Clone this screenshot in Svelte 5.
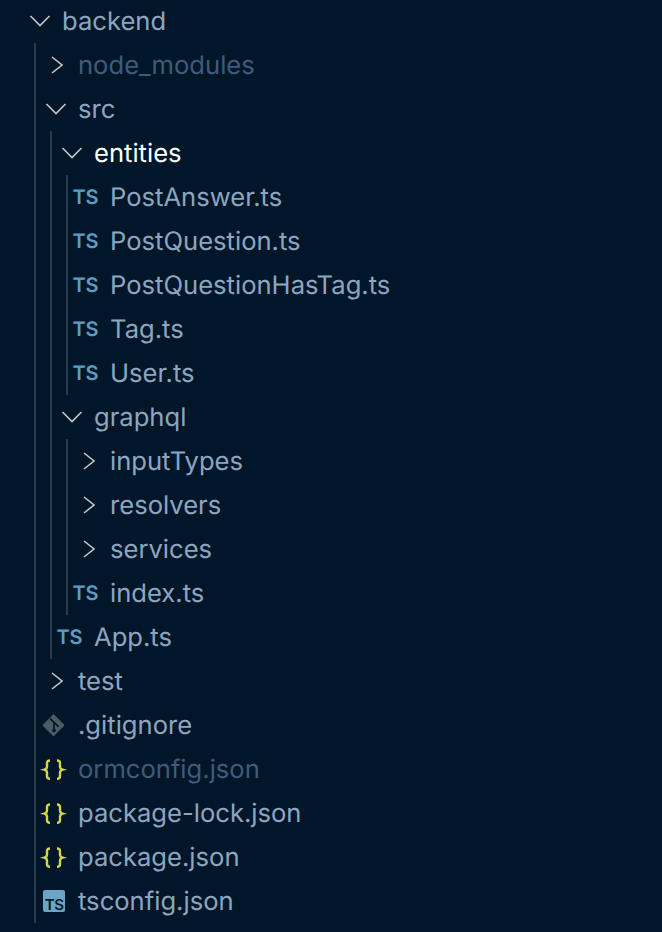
<script lang="ts">
  type Node = {
    name: string;
    icon?: 'ts' | 'json' | 'git' | 'tsconfig';
    open?: boolean;
    dim?: boolean;
    active?: boolean;
    children?: Node[];
  };

  const ts = (name: string): Node => ({ name, icon: 'ts' });

  const tree: Node[] = [
    {
      name: 'backend',
      open: true,
      children: [
        { name: 'node_modules', dim: true },
        {
          name: 'src',
          open: true,
          children: [
            {
              name: 'entities',
              open: true,
              active: true,
              children: [
                ts('PostAnswer.ts'),
                ts('PostQuestion.ts'),
                ts('PostQuestionHasTag.ts'),
                ts('Tag.ts'),
                ts('User.ts'),
              ],
            },
            {
              name: 'graphql',
              open: true,
              children: [{ name: 'inputTypes' }, { name: 'resolvers' }, { name: 'services' }, ts('index.ts')],
            },
            ts('App.ts'),
          ],
        },
        { name: 'test' },
        { name: '.gitignore', icon: 'git' },
        { name: 'ormconfig.json', icon: 'json', dim: true },
        { name: 'package-lock.json', icon: 'json' },
        { name: 'package.json', icon: 'json' },
        { name: 'tsconfig.json', icon: 'tsconfig' },
      ],
    },
  ];
</script>

{#snippet row(node: Node)}
  <div class="row" class:dim={node.dim} class:active={node.active}>
    <span class="icon">
      {#if node.icon === 'ts'}
        <span class="ts">TS</span>
      {:else if node.icon === 'tsconfig'}
        <span class="ts-box">TS</span>
      {:else if node.icon === 'json'}
        <svg viewBox="0 0 32 32" width="32" height="32" fill="none" stroke="#d3d34f" stroke-width="2.4">
          <path d="M12 7.500c-2.200 0-3 .8-3 2.600v3.500c0 1.600-.8 2.600-2.600 3.100 1.800.5 2.600 1.500 2.600 3.100v3.500c0 1.800.8 2.600 3 2.600" />
          <path d="M19 7.500c2.200 0 3 .8 3 2.600v3.500c0 1.600.8 2.600 2.600 3.100-1.800.5-2.600 1.500-2.600 3.100v3.500c0 1.800-.8 2.600-3 2.600" />
        </svg>
      {:else if node.icon === 'git'}
        <svg viewBox="0 0 32 32" width="32" height="32">
          <path fill="#4a5c65" d="M15.500 5 26 15.500a1 1 0 0 1 0 1.400L16.200 26.700a1 1 0 0 1-1.400 0L5 16.900a1 1 0 0 1 0-1.400Z" />
          <path fill="none" stroke="#02162a" stroke-width="1.700" d="M12 9.500 16 13.500M16 12.500V21M16.300 13.500 20.500 17.700" />
          <circle cx="16" cy="21.500" r="1.800" fill="#02162a" />
        </svg>
      {:else if node.open}
        <svg viewBox="0 0 32 32" width="32" height="32" fill="none" stroke="#c8c8c8" stroke-width="1.600">
          <path d="M8.500 11 18 20.500 27.500 11" />
        </svg>
      {:else}
        <svg viewBox="0 0 32 32" width="32" height="32" fill="none" stroke="#c8c8c8" stroke-width="1.600">
          <path d="M14 8 24 16 14 24" />
        </svg>
      {/if}
    </span>
    <span class="name">{node.name}</span>
  </div>
  {#if node.children}
    <div class="children">
      {#each node.children as child}
        {@render row(child)}
      {/each}
    </div>
  {/if}
{/snippet}

<div class="explorer">
  {#each tree as node}
    {@render row(node)}
  {/each}
</div>

<style>
  :global(body) {
    background: #02162a;
  }

  .explorer {
    height: 932px;
    box-sizing: border-box;
    padding-left: 20px;
    overflow: hidden;
    background: #02162a;
    font-family: Inter, "Noto Sans", sans-serif;
    font-size: 25.6px;
    text-rendering: geometricPrecision;
    color: #8ca6c0;
  }

  .explorer > .row:first-child {
    margin-top: -1px;
  }

  .row {
    display: flex;
    align-items: center;
    height: 44px;
    padding-left: 2px;
    white-space: nowrap;
  }

  .row.dim {
    color: #3e5c79;
  }

  .row.active {
    color: #ffffff;
  }

  .icon {
    flex: none;
    display: flex;
    align-items: center;
    justify-content: center;
    width: 31px;
    height: 32px;
    margin-right: 9px;
  }

  .icon svg {
    flex: none;
    display: block;
  }

  .ts {
    color: #5a9fc2;
    font-size: 20px;
    font-weight: 600;
    line-height: 1;
  }

  .ts-box {
    display: flex;
    align-items: flex-end;
    justify-content: flex-end;
    box-sizing: border-box;
    width: 22px;
    height: 22px;
    padding: 0 1px 0 0;
    border-radius: 2px;
    background: #6aa5c5;
    color: #02162a;
    font-size: 15px;
    font-weight: 600;
    letter-spacing: -0.5px;
    line-height: 1;
  }

  .children {
    margin-left: 14px;
    border-left: 2px solid #2b3a47;
  }
</style>
